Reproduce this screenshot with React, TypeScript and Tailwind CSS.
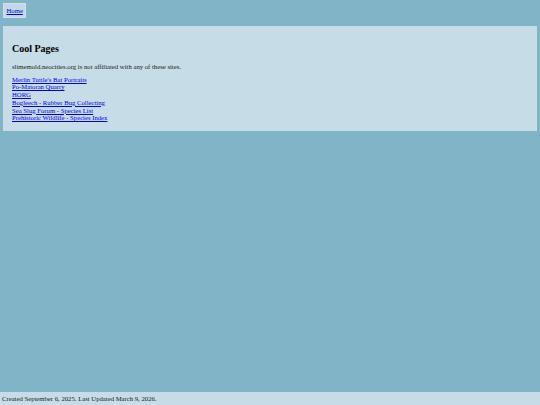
const links = [
  "Merlin Tuttle's Bat Portraits",
  'Po-Matoran Quarry',
  'HORG',
  'Bogleech - Rubber Bug Collecting',
  'Sea Slug Forum - Species List',
  'Prehistoric Wildlife - Species Index',
];

export default function App() {
  return (
    <div className="flex min-h-screen flex-col bg-[#82b4c8] font-['Liberation_Serif',serif] text-[6.7px] leading-[1.15] text-[#1a1a1a]">
      <nav className="flex p-[3px]">
        <a
          href="#"
          className="block border border-[#cfe2ea] bg-[#c2d9e4] px-[2.5px] py-[2.5px] text-[#0000ee] underline"
        >
          Home
        </a>
      </nav>

      <main className="mx-[3px] mt-[5px] bg-[#c6dce6] px-[9px] pb-[9px] pt-[17px]">
        <h2 className="mb-[8.5px] text-[10px] font-bold text-black">Cool Pages</h2>
        <p className="mb-[5.3px]">
          slimemold.neocities.org is not affiliated with any of these sites.
        </p>
        <div className="flex flex-col items-start">
          {links.map((link) => (
            <a key={link} href="#" className="text-[#0000ee] underline">
              {link}
            </a>
          ))}
        </div>
      </main>

      <footer className="mt-auto bg-[#c6dce6] px-[2px] py-[2.65px]">
        Created September 6, 2025. Last Updated March 9, 2026.
      </footer>
    </div>
  );
}
